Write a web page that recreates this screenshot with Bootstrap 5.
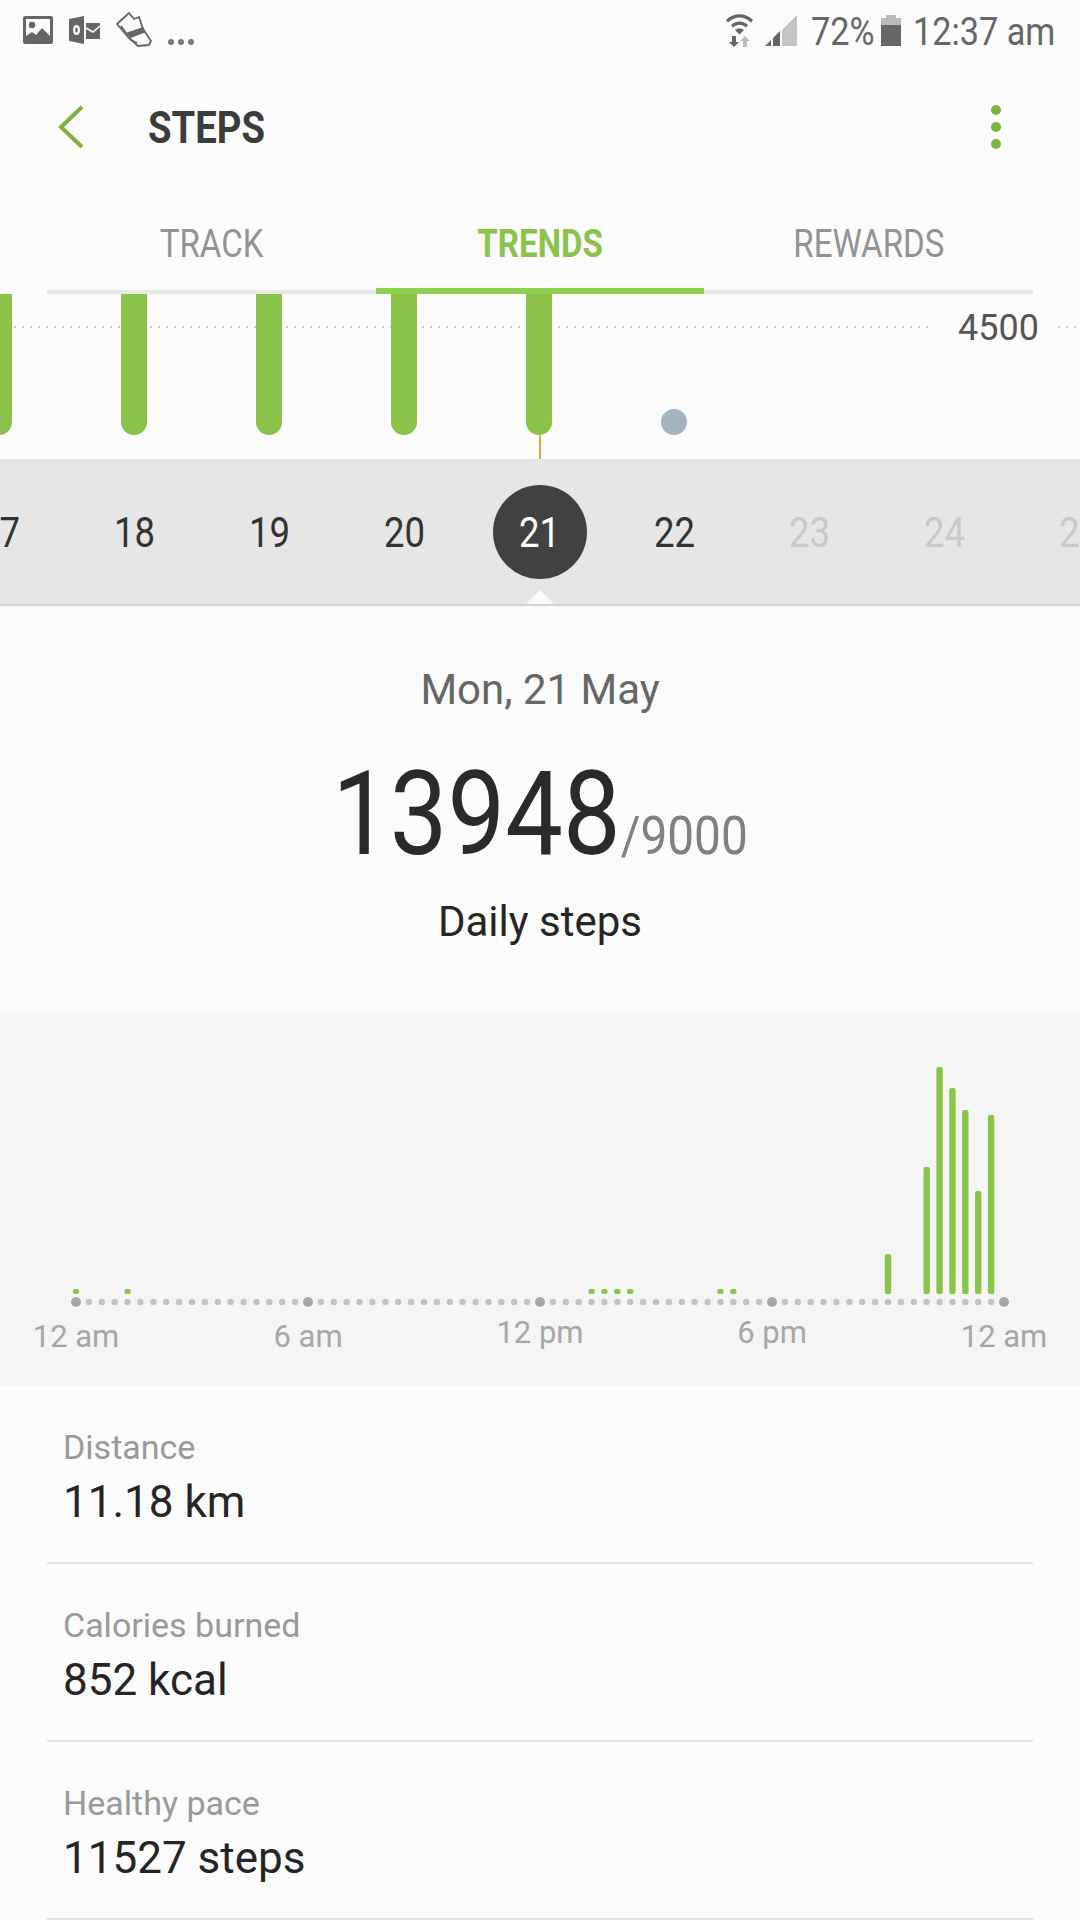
<!DOCTYPE html>
<html lang="en">
<head>
  <meta charset="UTF-8">
  <meta name="viewport" content="width=device-width, initial-scale=1.0">
  <title>Steps</title>
  <link href="https://cdn.jsdelivr.net/npm/bootstrap@5.3.0/dist/css/bootstrap.min.css" rel="stylesheet">
  <style>
    body { width: 1080px; height: 1920px; overflow: hidden; background: #fbfbfb; font-family: Roboto, "Liberation Sans", sans-serif; color: #252525; }
    .squeeze { display: inline-block; transform: scaleX(.87); }
    .status-bar { height: 60px; padding: 0 26px 0 23px; color: #666; }
    .status-text { display: inline-block; font-size: 38px; line-height: 60px; padding-top: 4px; white-space: nowrap; transform-origin: left center; transform: scaleX(.9); }
    .status-pct { width: 61px; margin-left: 14px; }
    .status-time { width: 141px; margin-left: 12px; }
    .status-more { margin-bottom: 15px; }
    .status-more i { display: block; width: 6px; height: 6px; border-radius: 50%; background: #777; }
    .signal-icon { margin-left: 12px; }
    .battery-icon { margin-left: 9px; }
    .step-head { height: 130px; padding: 4px 78px 0 58px; }
    .step-title { margin: 0 0 0 64px; font-size: 45px; font-weight: 700; color: #3c3c3c; line-height: 1; transform-origin: left center; transform: scaleX(.85); }
    .tab-row { margin: 0 47px; height: 104px; border-bottom: 4px solid #e8e8e8; }
    .tab-row .nav-link { height: 104px; padding: 31px 0 0; font-size: 38px; line-height: 46px; color: #929292; margin-bottom: -4px; }
    .tab-row .nav-link.active { color: #8bc34a; font-weight: 700; border-bottom: 6px solid #8fd14f; }
    .week-chart { height: 165px; }
    .week-chart svg { display: block; }
    .goal-label { position: absolute; left: 958px; top: 14px; font-size: 36px; line-height: 40px; color: #555; }
    .day-strip { height: 147px; background: #e6e6e6; border-bottom: 2px solid #d4d4d4; overflow: hidden; }
    .day-cell { flex: 0 0 135px; text-align: center; font-size: 42px; line-height: 50px; padding-top: 2px; color: #333; }
    .day-cell.today { color: #fff; padding-top: 0; }
    .day-cell.later { color: #c9c9c9; }
    .today-dot { width: 94px; height: 94px; background: #414141; border-radius: 50%; margin: 0 auto; line-height: 96px; }
    .notch { position: absolute; left: 524px; bottom: -2px; width: 0; height: 0; border-left: 16px solid transparent; border-right: 16px solid transparent; border-bottom: 16px solid #fbfbfb; }
    .summary { height: 405px; padding-top: 60px; }
    .summary-date { font-size: 42px; line-height: 48px; color: #666; }
    .summary-count { font-size: 116px; line-height: 120px; margin-top: 40px; color: #2a2a2a; white-space: nowrap; transform: scaleX(.885); }
    .summary-goal { font-size: 54px; color: #808080; }
    .summary-name { font-size: 42px; line-height: 48px; margin-top: 2px; color: #252525; }
    .day-chart { height: 375px; background: #f5f5f5; overflow: hidden; }
    .day-chart svg { display: block; }
    .hour-row { height: 50px; padding-top: 1px; }
    .hour-cell { flex: 0 0 232px; text-align: center; font-size: 31px; line-height: 50px; color: #a6a6a6; }
    .hour-cell.raised { margin-top: -4px; }
    .stat-row { height: 178px; margin: 0 47px; padding: 37px 0 0 16px; border-bottom: 2px solid #e2e2e2; }
    .stat-label { font-size: 34px; line-height: 48px; color: #999; }
    .stat-value { font-size: 44px; line-height: 60px; margin-top: 1px; color: #252525; }
  </style>
</head>
<body>
  <div class="status-bar d-flex align-items-center">
    <svg width="30" height="28" viewBox="0 0 30 28" fill="#666" class="me-3"><path fill-rule="evenodd" d="M2 0h26a2 2 0 0 1 2 2v24a2 2 0 0 1-2 2H2a2 2 0 0 1-2-2V2a2 2 0 0 1 2-2zm1 3v17l6-4 4 3 6-7 8 8V3z"/><circle cx="9" cy="9" r="3.2"/></svg>
    <svg width="31" height="28" viewBox="0 0 31 28" fill="#666" class="me-2"><path fill-rule="evenodd" d="M0 3l15-3v28L0 25zm7.500 6c-2.500 0-3.500 2-3.500 5s1 5 3.500 5 3.500-2 3.500-5-1-5-3.500-5zm0 2.500c.9 0 1.200 1 1.200 2.500s-.3 2.500-1.200 2.500-1.200-1-1.200-2.500.3-2.500 1.200-2.500z"/><path d="M17 7h14v2l-7 6-7-4zM17 13l7 4 7-6v12H17z"/></svg>
    <svg width="36" height="36" viewBox="0 0 36 36" fill="none" stroke="#666" stroke-width="1.800" stroke-linejoin="round" class="ms-2"><path d="M13 1L1 12l11 13 10 9 11-1 2-4-8-12-4-12-5 2z"/><path d="M12 21l15-5 1 4-13 5z" fill="#666"/><path d="M5 14l10 14 6 3"/></svg>
    <span class="status-more d-flex gap-1 ms-3 align-self-end"><i></i><i></i><i></i></span>
    <svg width="27" height="34" viewBox="0 0 27 34" class="ms-auto"><path d="M0 7a19 19 0 0 1 27 0l-2 2.500a16 16 0 0 0-23 0zM5 12a12 12 0 0 1 17 0l-2 2.500a9 9 0 0 0-13 0zM9 17a6.500 6.500 0 0 1 9 0l-4.500 4.500z" fill="#666"/><path d="M6 23v6H3l5 5 5-5h-3v-6z" fill="#666"/><path d="M17 34v-6h-3l5-5 5 5h-3v6z" fill="#bbb"/></svg>
    <svg width="32" height="31" viewBox="0 0 32 31" class="signal-icon"><path d="M17 15L32 0v31H17z" fill="#c4c4c4"/><path d="M0 31l6-6v6zM8 23l7-7v15H8z" fill="#666"/></svg>
    <span class="status-text status-pct">72%</span>
    <svg width="20" height="31" viewBox="0 0 20 31" class="battery-icon"><path d="M5 0h10v3h5v7H0V3h5z" fill="#bbb"/><path d="M0 10h20v21H0z" fill="#666"/></svg>
    <span class="status-text status-time">12:37 am</span>
  </div>

  <div class="step-head d-flex align-items-center">
    <svg width="26" height="44" viewBox="0 0 26 44" fill="none" stroke="#7cb342" stroke-width="4"><path d="M24 2L3 22l21 20"/></svg>
    <h1 class="step-title">STEPS</h1>
    <svg width="12" height="46" viewBox="0 0 12 46" fill="#7cb342" class="ms-auto"><circle cx="6" cy="6" r="5"/><circle cx="6" cy="23" r="5"/><circle cx="6" cy="40" r="5"/></svg>
  </div>

  <ul class="nav nav-justified tab-row">
    <li class="nav-item"><a class="nav-link" href="#"><span class="squeeze">TRACK</span></a></li>
    <li class="nav-item"><a class="nav-link active" href="#"><span class="squeeze">TRENDS</span></a></li>
    <li class="nav-item"><a class="nav-link" href="#"><span class="squeeze">REWARDS</span></a></li>
  </ul>

  <div class="week-chart position-relative">
    <svg id="weekSvg" width="1080" height="165" viewBox="0 0 1080 165"></svg>
    <span class="goal-label">4500</span>
  </div>

  <div class="day-strip position-relative d-flex justify-content-center align-items-center" id="dayStrip">
    <div class="notch"></div>
  </div>

  <div class="summary text-center">
    <div class="summary-date">Mon, 21 May</div>
    <div class="summary-count">13948<span class="summary-goal">/9000</span></div>
    <div class="summary-name">Daily steps</div>
  </div>

  <div class="day-chart">
    <svg id="daySvg" width="1080" height="300" viewBox="0 0 1080 300"></svg>
    <div class="hour-row d-flex justify-content-center">
      <div class="hour-cell">12 am</div>
      <div class="hour-cell">6 am</div>
      <div class="hour-cell raised">12 pm</div>
      <div class="hour-cell raised">6 pm</div>
      <div class="hour-cell">12 am</div>
    </div>
  </div>

  <div class="stat-row"><div class="stat-label">Distance</div><div class="stat-value">11.18 km</div></div>
  <div class="stat-row"><div class="stat-label">Calories burned</div><div class="stat-value">852 kcal</div></div>
  <div class="stat-row"><div class="stat-label">Healthy pace</div><div class="stat-value">11527 steps</div></div>

  <script>
    // week chart, bars hang from the tab line
    let week = '<line x1="14" y1="33" x2="934" y2="33" stroke="#c8c8c8" stroke-width="2" stroke-dasharray="2 6"/>';
    week += '<line x1="1058" y1="33" x2="1080" y2="33" stroke="#c8c8c8" stroke-width="2" stroke-dasharray="2 6"/>';
    [-1, 134, 269, 404, 539].forEach(x => {
      week += `<path d="M${x - 13} 0h26v128a13 13 0 0 1-26 0z" fill="#8bc34a"/>`;
    });
    week += '<circle cx="674" cy="128" r="13" fill="#a4b4be"/>';
    week += '<rect x="539" y="141" width="2" height="24" fill="#e8a33d"/>';
    document.getElementById("weekSvg").innerHTML = week;

    const strip = document.getElementById("dayStrip");
    [17, 18, 19, 20, 21, 22, 23, 24, 25].forEach(d => {
      const cell = document.createElement("div");
      cell.className = "day-cell" + (d === 21 ? " today" : d > 22 ? " later" : "");
      cell.innerHTML = d === 21 ? `<div class="today-dot"><span class="squeeze">${d}</span></div>` : `<span class="squeeze">${d}</span>`;
      strip.appendChild(cell);
    });

    // 72 slots of 12.89px, one per 20 minutes
    const slotX = i => 76 + i * 928 / 72;
    const top0 = 1011;
    let day = "";
    for (let i = 0; i <= 72; i++) {
      const big = i % 18 === 0;
      day += `<circle cx="${slotX(i)}" cy="${1302 - top0}" r="${big ? 5 : 3.2}" fill="${big ? "#a8a8a8" : "#c4c4c4"}"/>`;
    }
    const bars = { 0: 1289, 4: 1289, 40: 1289, 41: 1289, 42: 1289, 43: 1289, 50: 1289, 51: 1289, 63: 1254, 66: 1167, 67: 1067, 68: 1088, 69: 1110, 70: 1191, 71: 1115 };
    Object.keys(bars).forEach(i => {
      const y = bars[i] - top0;
      day += `<rect x="${slotX(+i) - 3.2}" y="${y}" width="6.400" height="${1294 - bars[i]}" rx="2" fill="#8bc34a"/>`;
    });
    document.getElementById("daySvg").innerHTML = day;
  </script>
  <script src="https://cdn.jsdelivr.net/npm/bootstrap@5.3.0/dist/js/bootstrap.bundle.min.js"></script>
</body>
</html>
